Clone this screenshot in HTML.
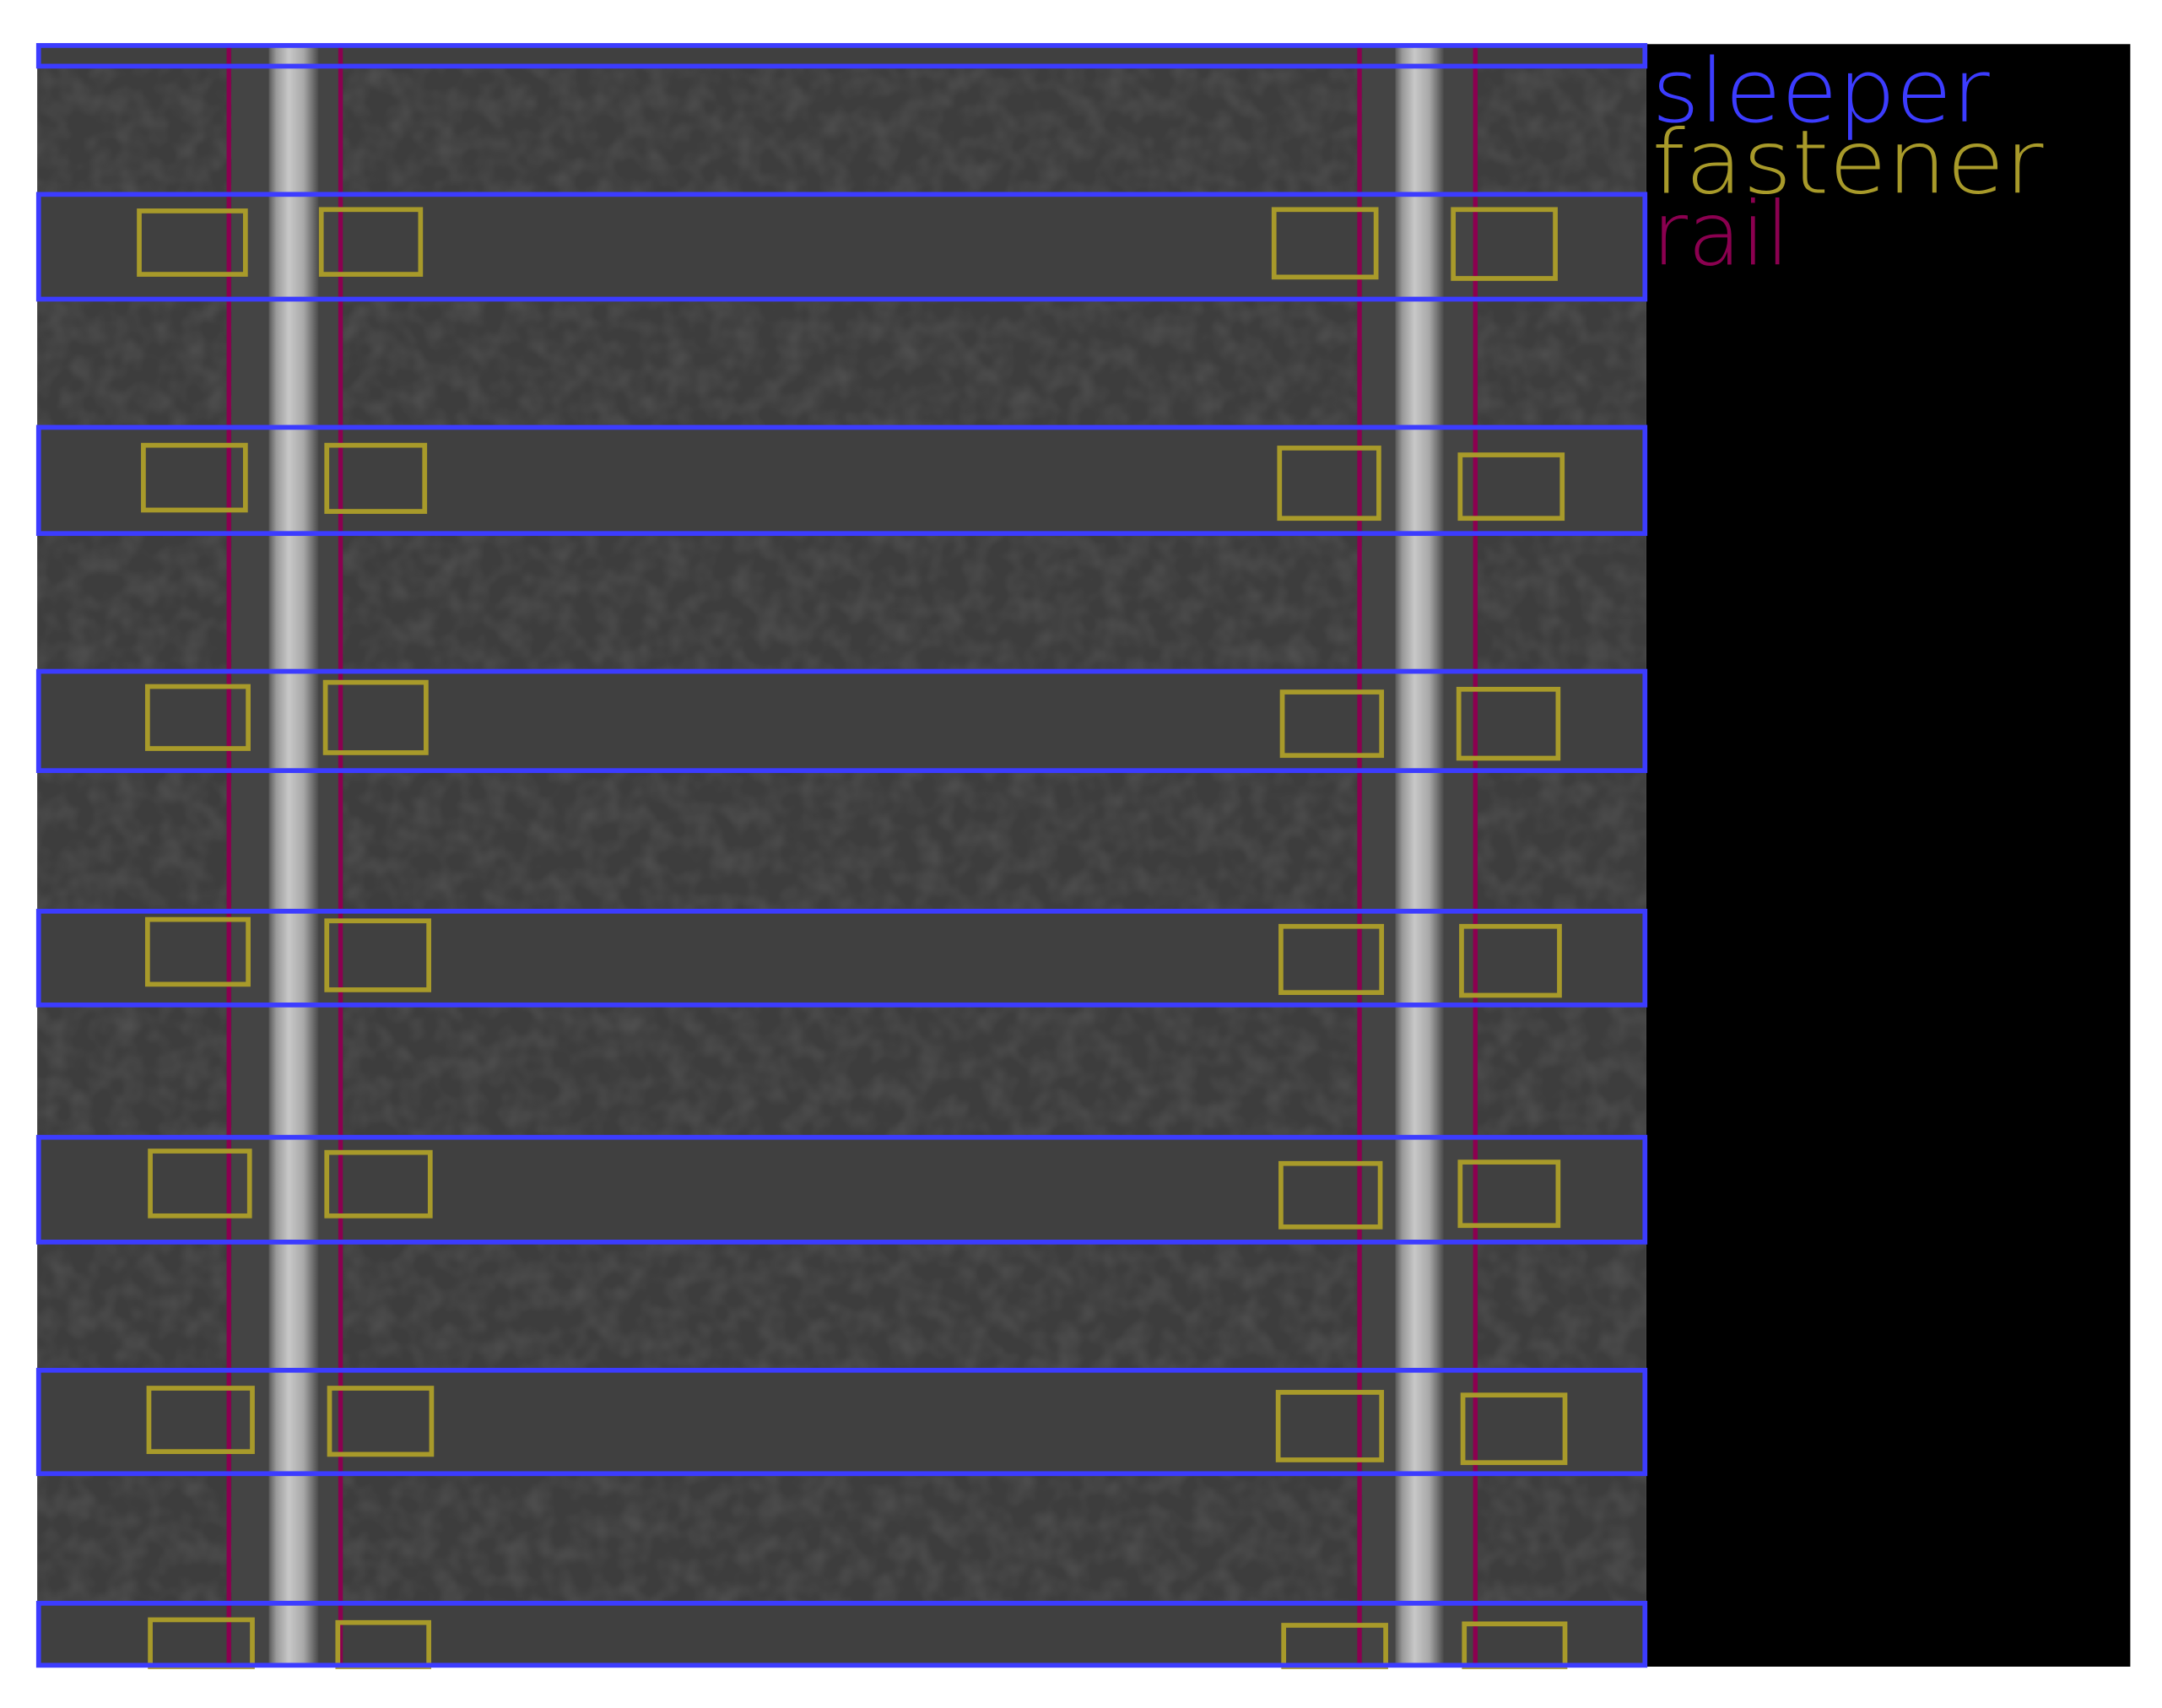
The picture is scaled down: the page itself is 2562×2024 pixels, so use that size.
<!DOCTYPE html>
<html><head><meta charset="utf-8"><style>html,body{margin:0;padding:0;background:#fff}svg{display:block}</style></head>
<body>
<svg width="2562" height="2024" viewBox="0 0 1568 1239" preserveAspectRatio="none" xmlns="http://www.w3.org/2000/svg">
<defs>
<linearGradient id="rail" x1="0" x2="1" y1="0" y2="0">
<stop offset="0" stop-color="#5a5a5a"/><stop offset="0.15" stop-color="#9a9a9a"/><stop offset="0.4" stop-color="#c8c8c8"/><stop offset="0.7" stop-color="#a8a8a8"/><stop offset="0.9" stop-color="#6a6a6a"/><stop offset="1" stop-color="#4a4a4a"/>
</linearGradient>
<filter id="noise" x="0" y="0" width="100%" height="100%">
<feTurbulence type="fractalNoise" baseFrequency="0.06" numOctaves="2" seed="3"/>
<feColorMatrix type="matrix" values="0 0 0 0 0.2  0 0 0 0 0.2  0 0 0 0 0.2  0 0 0 1.4 -0.5"/>
</filter>
</defs>
<rect x="0" y="0" width="1568" height="1239" fill="#fff"/>
<rect x="27" y="32" width="1167" height="1177" fill="#3d3d3d"/>
<rect x="27" y="32" width="1167" height="1177" fill="#000" opacity="0.35" filter="url(#noise)"/>
<!-- sleepers -->
<g fill="#404040">
<rect x="27" y="32" width="1167" height="16"/>
<rect x="27" y="141" width="1167" height="76"/>
<rect x="27" y="310" width="1167" height="77"/>
<rect x="27" y="487" width="1167" height="72"/>
<rect x="27" y="661" width="1167" height="68"/>
<rect x="27" y="825" width="1167" height="76"/>
<rect x="27" y="994" width="1167" height="75"/>
<rect x="27" y="1163" width="1167" height="46"/>
</g>
<!-- rail plates -->
<rect x="168" y="32" width="78" height="1177" fill="#444"/>
<rect x="988" y="32" width="82" height="1177" fill="#444"/>
<rect x="195" y="32" width="36" height="1177" fill="url(#rail)"/>
<rect x="1012" y="32" width="35" height="1177" fill="url(#rail)"/>
<!-- black panel -->
<rect x="1194" y="32" width="351" height="1177" fill="#000"/>
<!-- rail lines -->
<g stroke="#8b0050" stroke-width="3.3">
<line x1="166" y1="32" x2="166" y2="1209"/>
<line x1="247" y1="32" x2="247" y2="1209"/>
<line x1="986" y1="32" x2="986" y2="1209"/>
<line x1="1070" y1="32" x2="1070" y2="1209"/>
</g>
<!-- fasteners -->
<g fill="none" stroke="#a89a2a" stroke-width="3.5">
<rect x="101" y="153" width="77" height="46"/><rect x="233" y="152" width="72" height="47"/><rect x="924" y="152" width="74" height="49"/><rect x="1054" y="152" width="74" height="50"/>
<rect x="104" y="323" width="74" height="47"/><rect x="237" y="323" width="71" height="48"/><rect x="928" y="325" width="72" height="51"/><rect x="1059" y="330" width="74" height="46"/>
<rect x="107" y="498" width="73" height="45"/><rect x="236" y="495" width="73" height="51"/><rect x="930" y="502" width="72" height="46"/><rect x="1058" y="500" width="72" height="50"/>
<rect x="107" y="667" width="73" height="47"/><rect x="237" y="668" width="74" height="50"/><rect x="929" y="672" width="73" height="48"/><rect x="1060" y="672" width="71" height="50"/>
<rect x="109" y="835" width="72" height="47"/><rect x="237" y="836" width="75" height="46"/><rect x="929" y="844" width="72" height="46"/><rect x="1059" y="843" width="71" height="46"/>
<rect x="108" y="1007" width="75" height="46"/><rect x="239" y="1007" width="74" height="48"/><rect x="927" y="1010" width="75" height="49"/><rect x="1061" y="1012" width="74" height="49"/>
<rect x="109" y="1175" width="74" height="34"/><rect x="245" y="1177" width="66" height="32"/><rect x="931" y="1179" width="74" height="30"/><rect x="1062" y="1178" width="73" height="31"/>
</g>
<!-- sleeper boxes -->
<g fill="none" stroke="#3c3cff" stroke-width="3.5">
<rect x="28" y="33" width="1165" height="15"/>
<rect x="28" y="141" width="1165" height="76"/>
<rect x="28" y="310" width="1165" height="77"/>
<rect x="28" y="487" width="1165" height="72"/>
<rect x="28" y="661" width="1165" height="68"/>
<rect x="28" y="825" width="1165" height="76"/>
<rect x="28" y="994" width="1165" height="75"/>
<rect x="28" y="1163" width="1165" height="45"/>
</g>
<!-- legend -->
<g font-family="'DejaVu Sans', 'Liberation Sans', sans-serif" font-weight="200" font-size="64">
<text x="1198" y="88" fill="#3c3cff" textLength="245" lengthAdjust="spacingAndGlyphs">sleeper</text>
<text x="1198" y="140" fill="#a89a2a" textLength="284" lengthAdjust="spacingAndGlyphs">fastener</text>
<text x="1198" y="192" fill="#8b0050" textLength="100" lengthAdjust="spacingAndGlyphs">rail</text>
</g>
</svg>
</body></html>
